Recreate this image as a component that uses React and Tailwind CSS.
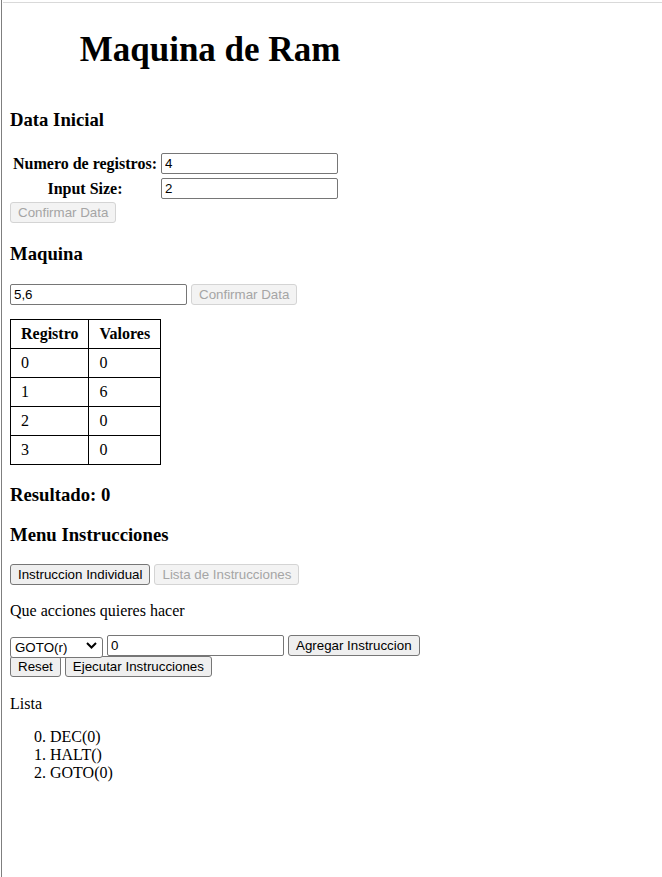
import { useState } from "react"

const serif = "font-['Liberation_Serif','Times_New_Roman',serif]"
const sans = "font-['Liberation_Sans',Arial,sans-serif]"

const btnBase = `h-[21px] px-[7px] border rounded-[3px] text-[13.333px] leading-[15px] whitespace-nowrap ${sans}`
const btnOn = `${btnBase} border-[#767676] bg-[#efefef] text-black`
const btnOff = `${btnBase} border-[#d4d4d4] bg-[#f3f3f3] text-[#a5a5a5]`
const inputCls = `block w-[177px] h-[21px] border border-[#767676] rounded-[2px] px-[3px] text-[13.333px] leading-[15px] text-black bg-white ${sans}`

const App = () => {
  const [numRegistros, setNumRegistros] = useState("4")
  const [inputSize, setInputSize] = useState("2")
  const [entrada, setEntrada] = useState("5,6")
  const [arg, setArg] = useState("0")
  const [op, setOp] = useState("GOTO")
  const registros = [0, 6, 0, 0]
  const lista = ["DEC(0)", "HALT()", "GOTO(0)"]

  return (
    <div className={`min-h-[877px] bg-white pl-px text-black ${serif}`}>
      <div className="min-h-[877px] border-l border-[#7f7f7f] pt-[2px]">
        <div className="ml-px h-px bg-[#d9d9d9]" />

        <div className="pl-[8px]">
          <h1 className="mt-[27px] w-[400px] text-center text-[35px] font-bold leading-[40px]">
            Maquina de Ram
          </h1>

          <h3 className="mt-[39px] text-[18.72px] font-bold leading-[22px]">Data Inicial</h3>

          <table className="mt-[19px] border-separate border-spacing-[2px]">
            <tbody>
              <tr>
                <th className="p-px text-[16px] font-bold leading-[18px]">Numero de registros:</th>
                <td className="p-px">
                  <input className={inputCls} value={numRegistros} onChange={(e) => setNumRegistros(e.target.value)} />
                </td>
              </tr>
              <tr>
                <th className="p-px text-[16px] font-bold leading-[18px]">Input Size:</th>
                <td className="p-px">
                  <input className={inputCls} value={inputSize} onChange={(e) => setInputSize(e.target.value)} />
                </td>
              </tr>
            </tbody>
          </table>
          <div className="-mt-[2px]">
            <button disabled className={btnOff}>Confirmar Data</button>
          </div>

          <h3 className="mt-[19px] text-[18.72px] font-bold leading-[22px]">Maquina</h3>

          <div className="mt-[19px] flex items-start gap-[4px]">
            <input className={inputCls} value={entrada} onChange={(e) => setEntrada(e.target.value)} />
            <button disabled className={btnOff}>Confirmar Data</button>
          </div>

          <table className="mt-[14px] border-collapse text-[16px] leading-[18px]">
            <thead>
              <tr>
                <th className="border border-black px-[10px] py-[5px] font-bold">Registro</th>
                <th className="border border-black px-[10px] py-[5px] font-bold">Valores</th>
              </tr>
            </thead>
            <tbody>
              {registros.map((v, i) => (
                <tr key={i}>
                  <td className="border border-black px-[10px] py-[5px]">{i}</td>
                  <td className="border border-black px-[10px] py-[5px]">{v}</td>
                </tr>
              ))}
            </tbody>
          </table>

          <h3 className="mt-[19px] text-[18.72px] font-bold leading-[22px]">Resultado: 0</h3>

          <h3 className="mt-[18px] text-[18.72px] font-bold leading-[22px]">Menu Instrucciones</h3>

          <div className="mt-[18px] flex items-start gap-[4px]">
            <button className={btnOn}>Instruccion Individual</button>
            <button disabled className={btnOff}>Lista de Instrucciones</button>
          </div>

          <p className="mt-[17px] text-[16px] leading-[18px]">Que acciones quieres hacer</p>

          <div className="mt-[15px] flex items-start gap-[4px]">
            <div className="relative h-[21px] w-[93px]">
              <select
                value={op}
                onChange={(e) => setOp(e.target.value)}
                className={`h-full w-full appearance-none border border-[#767676] rounded-[3px] bg-white pl-[4px] text-[13.333px] leading-[15px] text-black ${sans}`}
              >
                <option value="INC">INC(r)</option>
                <option value="DEC">DEC(r)</option>
                <option value="GOTO">GOTO(r)</option>
                <option value="HALT">HALT()</option>
              </select>
              <svg className="pointer-events-none absolute right-[6px] top-[7px] h-[7px] w-[11px]" viewBox="0 0 11 7" fill="none">
                <path d="M1 1l4.5 4.5L10 1" stroke="#000" strokeWidth="2" />
              </svg>
            </div>
            <input className={inputCls} value={arg} onChange={(e) => setArg(e.target.value)} />
            <button className={btnOn}>Agregar Instruccion</button>
          </div>
          <div className="flex items-start gap-[4px]">
            <button className={btnOn}>Reset</button>
            <button className={btnOn}>Ejecutar Instrucciones</button>
          </div>

          <p className="mt-[18px] text-[16px] leading-[18px]">Lista</p>

          <ol start={0} className="mt-[15px] list-decimal pl-[40px] text-[16px] leading-[18px]">
            {lista.map((item, i) => (
              <li key={i}>{item}</li>
            ))}
          </ol>
        </div>
      </div>
    </div>
  )
}

export default App
